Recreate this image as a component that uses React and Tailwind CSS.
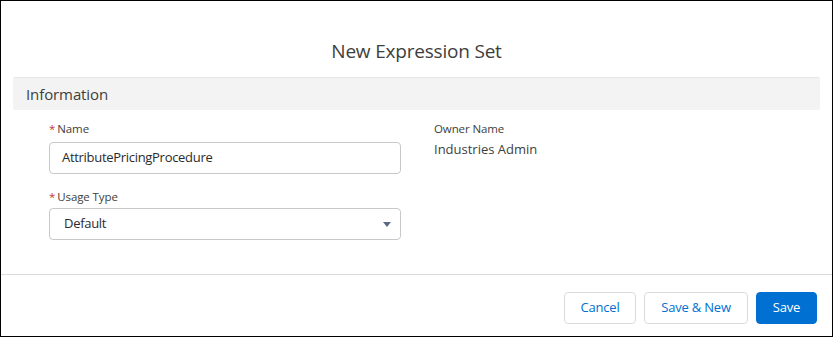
export default function App() {
  return (
    <div className="w-[833px] h-[337px] border border-black bg-white flex flex-col font-['Open_Sans',sans-serif] text-[#3e3e3c]">
      <div className="h-[76px] pt-[38px] text-center">
        <h2 className="text-[19px] leading-[24px] tracking-[-0.2px] text-[#3e3e3c]">New Expression Set</h2>
      </div>

      <div className="mx-[12px] h-[33px] bg-[#f3f3f3] border-t border-[#e5e5e5] rounded-[2px] px-[13px] flex items-center text-[15px] leading-[20px] tracking-[-0.1px] text-[#3e3e3c]">
        Information
      </div>

      <div className="flex pl-[48px] pt-[10px] h-[164px]">
        <div className="w-[352px] flex flex-col">
          <label className="text-[11.5px] leading-[18px] tracking-[-0.1px] text-[#3e3e3c]">
            <abbr className="text-[#c23934] no-underline mr-[2px]">*</abbr>Name
          </label>
          <div className="mt-[4px] h-[32px] border border-[#c9c9c9] rounded-[4px] px-[12px] flex items-center text-[13px] tracking-[-0.3px] text-[#2b2b2b]">
            AttributePricingProcedure
          </div>

          <label className="mt-[14px] text-[11.5px] leading-[18px] tracking-[-0.1px] text-[#3e3e3c]">
            <abbr className="text-[#c23934] no-underline mr-[2px]">*</abbr>Usage Type
          </label>
          <div className="mt-[2px] h-[32px] border border-[#c9c9c9] rounded-[4px] pl-[14px] pr-[9px] flex items-center justify-between text-[13px] tracking-[-0.3px] text-[#2b2b2b]">
            <span>Default</span>
            <svg width="8" height="5" viewBox="0 0 8 5">
              <path d="M0 0h8L4 5z" fill="#5a6b85" />
            </svg>
          </div>
        </div>

        <div className="ml-[33px] flex flex-col">
          <span className="text-[11.5px] leading-[18px] tracking-[-0.1px] text-[#3e3e3c]">Owner Name</span>
          <span className="mt-[1px] text-[13px] leading-[20px] text-[#3e3e3c]">Industries Admin</span>
        </div>
      </div>

      <div className="flex-1 border-t border-[#dddbda] flex justify-end items-start gap-[8px] pt-[17px] pr-[15px]">
        <button className="w-[72px] h-[32px] border border-[#dddbda] rounded-[4px] text-[13px] tracking-[-0.2px] text-[#0070d2] bg-white">
          Cancel
        </button>
        <button className="w-[104px] h-[32px] border border-[#dddbda] rounded-[4px] text-[13px] tracking-[-0.2px] text-[#0070d2] bg-white">
          Save &amp; New
        </button>
        <button className="w-[61px] h-[32px] border border-[#0070d2] rounded-[4px] text-[13px] tracking-[-0.2px] text-white bg-[#0070d2]">
          Save
        </button>
      </div>
    </div>
  );
}
